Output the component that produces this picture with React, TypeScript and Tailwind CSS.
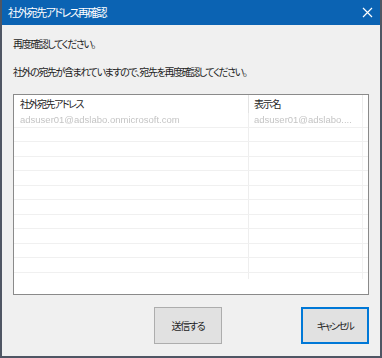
const rowHeights = [15, 14, 15, 14, 15, 14, 15, 14, 15, 14, 15, 6]

const jp = "font-['Noto_Sans_CJK_JP','Noto_Sans',sans-serif] [font-feature-settings:'palt']"

const CloseIcon = () => (
  <svg width="11" height="11" viewBox="0 0 11 11" fill="none">
    <path d="M1 1L10 10M10 1L1 10" stroke="white" strokeWidth="1.2" />
  </svg>
)

export default function App() {
  return (
    <div className={`w-[382px] h-[358px] flex flex-col bg-[#4f5664] ${jp}`}>
      <div className="h-[25px] mx-[2px] flex items-center justify-between bg-[#0b63b3] pl-[6px] pr-[7px]">
        <span className="text-[11px] tracking-[-1.6px] text-white leading-none">社外宛先アドレス再確認</span>
        <CloseIcon />
      </div>
      <div className="flex-1 mx-[2px] mb-[2px] bg-[#f0f0f0] flex flex-col px-[11px]">
        <p className="mt-[13px] h-[12px] text-[10px] tracking-[-1.4px] leading-[12px] text-[#1e1e1e]">
          再度確認してください。
        </p>
        <p className="mt-[16px] h-[12px] text-[10px] tracking-[-1.4px] leading-[12px] text-[#1e1e1e]">
          社外の宛先が含まれていますので、宛先を再度確認してください。
        </p>
        <div className="mt-[16px] h-[201px] border border-[#8a8a8a] bg-white flex flex-col overflow-hidden">
          <div className="h-[18px] flex shrink-0">
            <div className="w-[235px] border-r border-[#e3e3e3] pl-[6px] text-[10px] tracking-[-1.5px] leading-[18px] text-[#1e1e1e]">
              社外宛先アドレス
            </div>
            <div className="w-[114px] border-r border-[#ececec] pl-[5px] text-[10px] tracking-[-1.2px] leading-[18px] text-[#1e1e1e]">
              表示名
            </div>
          </div>
          {rowHeights.map((h, i) => (
            <div
              key={i}
              className={`flex shrink-0 ${i === 11 ? '' : 'border-b border-[#f0f0f0]'}`}
              style={{ height: h }}
            >
              <div className="w-[235px] border-r border-[#eeeeee] pl-[6px] text-[9.5px] leading-[14px] text-[#c4c4c4] blur-[0.6px] font-['Liberation_Sans',sans-serif]">
                {i === 0 ? 'adsuser01@adslabo.onmicrosoft.com' : ''}
              </div>
              <div className="w-[114px] border-r border-[#f2f2f2] pl-[5px] text-[9.5px] leading-[14px] text-[#c4c4c4] blur-[0.6px] font-['Liberation_Sans',sans-serif]">
                {i === 0 ? 'adsuser01@adslabo....' : ''}
              </div>
            </div>
          ))}
        </div>
        <div className="mt-[12px] flex justify-end gap-[79px]">
          <button className="w-[68px] h-[37px] bg-[#e1e1e1] border border-[#adadad] text-[10px] tracking-[-1.2px] text-[#1e1e1e]">
            送信する
          </button>
          <button className="w-[68px] h-[37px] bg-[#e1e1e1] border-2 border-[#0078d7] text-[10px] tracking-[-1.8px] text-[#1e1e1e]">
            キャンセル
          </button>
        </div>
      </div>
    </div>
  )
}
